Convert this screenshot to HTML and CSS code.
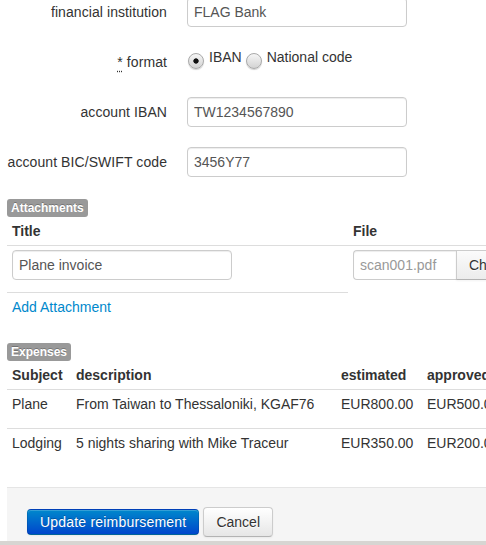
FILE: index.html
```html
<!DOCTYPE html>
<html>
<head>
<meta charset="utf-8">
<title>Reimbursement</title>
<link rel="stylesheet" href="styles.css">
</head>
<body>
<div class="page">
  <div class="groups">
    <div class="control-group">
      <label class="control-label">financial institution</label>
      <div class="controls"><input class="text-input" type="text" value="FLAG Bank"></div>
    </div>
    <div class="control-group">
      <label class="control-label"><abbr title="required">*</abbr> format</label>
      <div class="controls">
        <label class="radio first"><span class="radio-dot checked"></span>IBAN</label>
        <label class="radio"><span class="radio-dot"></span>National code</label>
      </div>
    </div>
    <div class="control-group">
      <label class="control-label">account IBAN</label>
      <div class="controls"><input class="text-input" type="text" value="TW1234567890"></div>
    </div>
    <div class="control-group">
      <label class="control-label">account BIC/SWIFT code</label>
      <div class="controls"><input class="text-input" type="text" value="3456Y77"></div>
    </div>
  </div>

  <div class="section-title"><span class="badge">Attachments</span></div>
  <table class="table att">
    <thead>
      <tr><th class="w-title">Title</th><th class="w-file">File</th></tr>
    </thead>
    <tbody>
      <tr>
        <td><input class="text-input cell-input" type="text" value="Plane invoice"></td>
        <td>
          <div class="fileupload">
            <span class="uneditable">scan001.pdf</span>
            <span class="btn btn-file">Change</span>
            <span class="btn btn-file">Remove</span>
          </div>
        </td>
      </tr>
      <tr><td><a class="link" href="#">Add Attachment</a></td></tr>
    </tbody>
  </table>

  <div class="section-title"><span class="badge">Expenses</span></div>
  <table class="table exp">
    <thead>
      <tr>
        <th class="w-subj">Subject</th>
        <th class="w-desc">description</th>
        <th class="w-amt">estimated</th>
        <th class="w-amt">approved</th>
        <th class="w-amt">paid</th>
        <th class="w-act"></th>
      </tr>
    </thead>
    <tbody>
      <tr>
        <td>Plane</td>
        <td>From Taiwan to Thessaloniki, KGAF76</td>
        <td>EUR800.00</td>
        <td>EUR500.00</td>
        <td>EUR0.00</td>
        <td><span class="btn">Edit</span></td>
      </tr>
      <tr>
        <td>Lodging</td>
        <td>5 nights sharing with Mike Traceur</td>
        <td>EUR350.00</td>
        <td>EUR200.00</td>
        <td>EUR0.00</td>
        <td><span class="btn">Edit</span></td>
      </tr>
    </tbody>
  </table>

  <div class="form-actions">
    <button class="btn btn-primary" type="button">Update reimbursement</button>
    <button class="btn" type="button">Cancel</button>
  </div>
</div>
<div class="footer"></div>
</body>
</html>
```

FILE: styles.css
```css
html {
  overflow: hidden;
}

body {
  margin: 0;
  font-family: "Liberation Sans", Arial, sans-serif;
  font-size: 14px;
  line-height: 20px;
  color: #333;
  background: #fff;
}

.page {
  width: 640px;
  padding-left: 7px;
  margin-top: -3px;
}

.groups {
  display: flex;
  flex-direction: column;
  gap: 20px;
}

.control-group {
  display: flex;
}

.control-label {
  flex: none;
  width: 160px;
  padding-top: 5px;
  text-align: right;
  letter-spacing: 0.08px;
}

.control-label abbr {
  text-decoration: underline dotted;
  text-underline-offset: 4px;
  cursor: help;
}

.controls {
  margin-left: 20px;
  min-height: 30px;
  display: flex;
  align-items: flex-start;
}

.text-input {
  box-sizing: content-box;
  width: 206px;
  height: 20px;
  margin: 0;
  padding: 4px 6px;
  border: 1px solid #ccc;
  border-radius: 4px;
  box-shadow: inset 0 1px 1px rgba(0, 0, 0, 0.075);
  font-family: inherit;
  font-size: 14px;
  line-height: 20px;
  color: #555;
  background: #fff;
  outline: none;
}

.radio {
  display: flex;
  align-items: flex-start;
  margin-left: 4px;
}

.radio.first {
  margin-left: 1px;
}

.radio-dot {
  flex: none;
  box-sizing: border-box;
  width: 16px;
  height: 16px;
  margin-top: 6px;
  margin-right: 5px;
  border: 1px solid #a9a9a9;
  border-radius: 50%;
  background: linear-gradient(#f6f6f6, #d3d3d3);
  box-shadow: 0 1px 1px rgba(0, 0, 0, 0.18);
}

.radio-dot.checked {
  background:
    radial-gradient(circle, #111 0, #111 2.3px, rgba(0, 0, 0, 0) 3px),
    linear-gradient(#f6f6f6, #d3d3d3);
}

.section-title {
  display: flex;
  margin-top: 22px;
}

.badge {
  font-size: 12px;
  font-weight: bold;
  line-height: 14px;
  padding: 2px 4px;
  color: #fff;
  background: #999;
  border-radius: 3px;
  text-shadow: 0 -1px 0 rgba(0, 0, 0, 0.25);
}

.table {
  border-collapse: separate;
  border-spacing: 0;
  table-layout: fixed;
}

.table th,
.table td {
  box-sizing: border-box;
  padding: 4px 5px;
  line-height: 20px;
  text-align: left;
  vertical-align: top;
  white-space: nowrap;
}

.table th {
  font-weight: bold;
}

.table tbody td {
  border-top: 1px solid #ddd;
}

.att {
  width: 541px;
}

.w-title {
  width: 341px;
}

.w-file {
  width: 200px;
}

.cell-input {
  display: block;
  margin-bottom: 8px;
}

.fileupload {
  display: flex;
}

.fileupload > * {
  flex: none;
}

.uneditable {
  width: 90px;
  height: 20px;
  padding: 4px 6px;
  border: 1px solid #ccc;
  border-right: none;
  border-radius: 4px 0 0 4px;
  box-shadow: inset 0 1px 1px rgba(0, 0, 0, 0.075);
  color: #999;
  overflow: hidden;
}

.link {
  color: #0088cc;
  text-decoration: none;
}

.exp {
  width: 687px;
}

.w-subj {
  width: 64px;
}

.w-desc {
  width: 265px;
}

.w-amt {
  width: 86px;
}

.w-act {
  width: 100px;
}

.btn {
  display: inline-block;
  box-sizing: border-box;
  margin: 0;
  padding: 4px 12px;
  font-family: inherit;
  font-size: 14px;
  line-height: 20px;
  color: #333;
  text-align: center;
  text-shadow: 0 1px 1px rgba(255, 255, 255, 0.75);
  background: linear-gradient(#ffffff, #e6e6e6);
  border: 1px solid #cccccc;
  border-bottom-color: #b3b3b3;
  border-radius: 4px;
  box-shadow: inset 0 1px 0 rgba(255, 255, 255, 0.2), 0 1px 2px rgba(0, 0, 0, 0.05);
}

.btn-file {
  border-radius: 0;
  background: linear-gradient(#fbfbfb, #ececec);
}

.btn-primary {
  line-height: 16px;
  letter-spacing: 0.2px;
  color: #fff;
  text-shadow: 0 -1px 0 rgba(0, 0, 0, 0.25);
  background: linear-gradient(#0088cc, #0046cc);
  border-color: rgba(0, 0, 0, 0.1) rgba(0, 0, 0, 0.1) rgba(0, 0, 0, 0.25);
}

.form-actions {
  display: flex;
  align-items: center;
  gap: 4px;
  margin-top: 20px;
  padding: 19px 20px 4px;
  background: #f5f5f5;
  border-top: 1px solid #e5e5e5;
}

.footer {
  height: 40px;
  background: #d7d5d2;
}
```
